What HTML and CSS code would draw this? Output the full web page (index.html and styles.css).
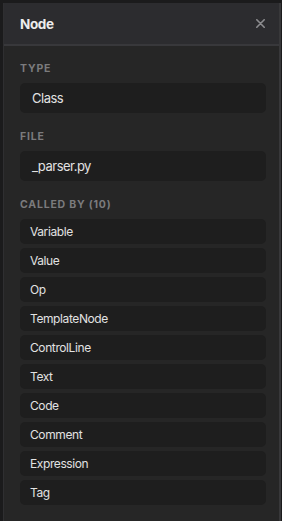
FILE: index.html
```html
<!DOCTYPE html>
<html lang="en">
<head>
  <meta charset="UTF-8">
  <meta name="viewport" content="width=device-width, initial-scale=1.0">
  <title>Node</title>
  <link rel="stylesheet" href="styles.css">
</head>
<body>
  <div class="panel">
    <div class="panel-header">
      <h2>Node</h2>
      <button class="close-btn" aria-label="Close">
        <svg width="9" height="9" viewBox="0 0 9 9">
          <path d="M0.8 0.8L8.2 8.2M8.2 0.8L0.8 8.2" stroke="#8c8c8f" stroke-width="1.6" stroke-linecap="round"/>
        </svg>
      </button>
    </div>

    <div class="panel-body">
      <div class="section">
        <div class="section-label">Type</div>
        <div class="value-box">Class</div>
      </div>

      <div class="section">
        <div class="section-label">File</div>
        <div class="value-box">_parser.py</div>
      </div>

      <div class="section">
        <div class="section-label">Called by (10)</div>
        <ul class="caller-list">
          <li>Variable</li>
          <li>Value</li>
          <li>Op</li>
          <li>TemplateNode</li>
          <li>ControlLine</li>
          <li>Text</li>
          <li>Code</li>
          <li>Comment</li>
          <li>Expression</li>
          <li>Tag</li>
        </ul>
      </div>
    </div>
  </div>
</body>
</html>
```

FILE: styles.css
```css
html, body {
  height: 100%;
}

body {
  margin: 0;
  padding: 3px 1px 0 3px;
  box-sizing: border-box;
  background-color: #1b1b1c;
  font-family: Inter, 'Helvetica Neue', Arial, sans-serif;
  color: #e2e2e2;
}

.panel {
  height: 100%;
  background-color: #262626;
  border-left: 1px solid #2f2f31;
  border-right: 2px solid #38383a;
  box-sizing: border-box;
}

.panel-header {
  display: flex;
  justify-content: space-between;
  align-items: center;
  height: 41px;
  padding: 0 14px 0 16px;
  background-color: #2c2c2f;
  border-bottom: 2px solid #38383b;
}

.panel-header h2 {
  margin: 0;
  font-size: 13.5px;
  font-weight: 700;
  letter-spacing: -0.4px;
  color: #ececec;
}

.close-btn {
  display: flex;
  padding: 0;
  border: none;
  background: none;
  cursor: pointer;
}

.panel-body {
  padding: 16px 13px 0 16px;
}

.section {
  margin-bottom: 17px;
}

.section-label {
  font-size: 10.5px;
  line-height: 14px;
  font-weight: 700;
  letter-spacing: 0.8px;
  text-transform: uppercase;
  color: #7b7b7d;
  margin-bottom: 7px;
}

.value-box {
  height: 30px;
  line-height: 30px;
  padding: 0 12px;
  font-size: 13px;
  letter-spacing: -0.5px;
  border-radius: 5px;
  background-color: #1e1e1e;
}

.caller-list {
  list-style: none;
  margin: 0;
  padding: 0;
  display: flex;
  flex-direction: column;
  gap: 4px;
}

.caller-list li {
  height: 25px;
  line-height: 25px;
  padding: 0 10px;
  font-size: 12px;
  letter-spacing: -0.4px;
  border-radius: 5px;
  background-color: #1e1e1e;
}
```
